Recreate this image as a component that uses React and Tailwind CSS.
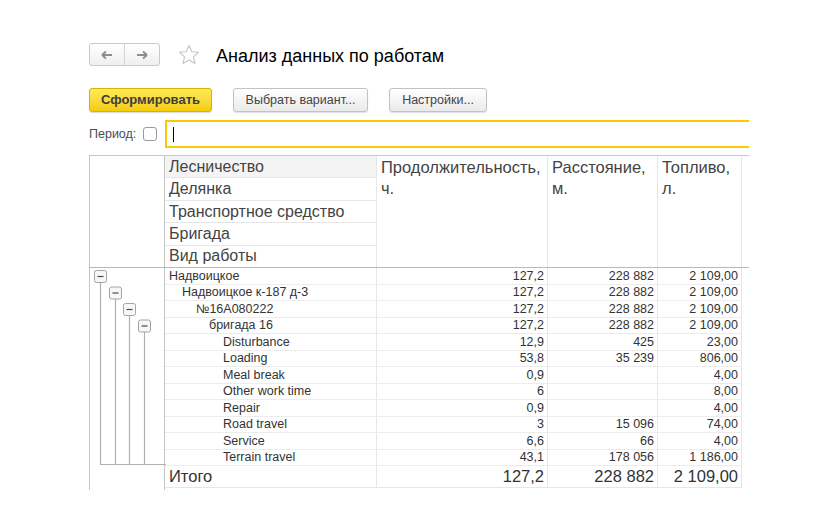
import React from 'react'

const rows = [
  { name: 'Надвоицкое', pad: 'pl-[4px]', d: '127,2', m: '228 882', f: '2 109,00' },
  { name: 'Надвоицкое к-187 д-3', pad: 'pl-[17px]', d: '127,2', m: '228 882', f: '2 109,00' },
  { name: '№16А080222', pad: 'pl-[31px]', d: '127,2', m: '228 882', f: '2 109,00' },
  { name: 'бригада 16', pad: 'pl-[44px]', d: '127,2', m: '228 882', f: '2 109,00' },
  { name: 'Disturbance', pad: 'pl-[58px]', d: '12,9', m: '425', f: '23,00' },
  { name: 'Loading', pad: 'pl-[58px]', d: '53,8', m: '35 239', f: '806,00' },
  { name: 'Meal break', pad: 'pl-[58px]', d: '0,9', m: '', f: '4,00' },
  { name: 'Other work time', pad: 'pl-[58px]', d: '6', m: '', f: '8,00' },
  { name: 'Repair', pad: 'pl-[58px]', d: '0,9', m: '', f: '4,00' },
  { name: 'Road travel', pad: 'pl-[58px]', d: '3', m: '15 096', f: '74,00' },
  { name: 'Service', pad: 'pl-[58px]', d: '6,6', m: '66', f: '4,00' },
  { name: 'Terrain travel', pad: 'pl-[58px]', d: '43,1', m: '178 056', f: '1 186,00' },
]

const groupHeads = ['Лесничество', 'Делянка', 'Транспортное средство', 'Бригада', 'Вид работы']

function Star() {
  return (
    <svg width="24" height="24" viewBox="0 0 24 24" fill="none" stroke="#c4c4c4" strokeWidth="1.1" strokeLinejoin="round">
      <path d="M12 2.5l2.8 6.2 6.7.6-5.1 4.5 1.6 6.6L12 16.9l-6 3.5 1.6-6.6-5.1-4.5 6.7-.6z" />
    </svg>
  )
}

// expand/collapse boxes and the branch lines of the grouping tree
function TreeLines() {
  const xs = [4, 19, 33, 48]
  return (
    <svg className="absolute left-0 top-0" width="76" height="200" viewBox="0 0 76 200">
      {xs.map((x, i) => (
        <line key={'v' + i} x1={x + 6.5} y1={2 + i * 16.5 + 12} x2={x + 6.5} y2="196.5" stroke="#b0b0b0" strokeWidth="1.2" />
      ))}
      <line x1="10" y1="196.5" x2="76" y2="196.5" stroke="#b0b0b0" strokeWidth="1.2" />
      {xs.map((x, i) => (
        <g key={'b' + i}>
          <rect x={x + 0.5} y={2.5 + i * 16.5} width="12" height="12" rx="2" fill="#f7f7f7" stroke="#a4a4a4" />
          <line x1={x + 3.5} y1={8.5 + i * 16.5} x2={x + 9.5} y2={8.5 + i * 16.5} stroke="#4a4a4a" strokeWidth="1.2" />
        </g>
      ))}
    </svg>
  )
}

export default function App() {
  return (
    <div className="w-[830px] h-[521px] overflow-hidden bg-white pl-[89px] pt-[43px] text-[#333]" style={{ fontFamily: '"Liberation Sans", Arial, sans-serif' }}>
      <div className="flex items-center h-[23px]">
        <div className="flex h-[23px] w-[71px] rounded-[3px] border border-[#c9c9c9] bg-gradient-to-b from-white to-[#efefef]">
          <div className="flex-1 flex items-center justify-center border-r border-[#d4d4d4]">
            <svg width="12" height="10" viewBox="0 0 12 10"><path d="M1 5h10M1 5l4-3.5M1 5l4 3.5" stroke="#8c8c8c" strokeWidth="1.8" fill="none" /></svg>
          </div>
          <div className="flex-1 flex items-center justify-center">
            <svg width="12" height="10" viewBox="0 0 12 10"><path d="M1 5h10M11 5L7 1.5M11 5L7 8.5" stroke="#8c8c8c" strokeWidth="1.8" fill="none" /></svg>
          </div>
        </div>
        <div className="ml-[17px] mt-[1px]"><Star /></div>
        <div className="ml-[15px] mt-[2px] text-[18px] text-black leading-none">Анализ данных по работам</div>
      </div>

      <div className="flex items-center gap-[21px] mt-[22px] h-[24px]">
        <button className="h-[24px] w-[123px] rounded-[3px] border border-[#d9b300] bg-gradient-to-b from-[#ffe957] to-[#f5cd00] text-[13px] font-bold text-[#3d3d3d] shadow-[0_1px_1px_rgba(0,0,0,0.15)]">Сформировать</button>
        <button className="h-[24px] w-[135px] rounded-[3px] border border-[#c2c2c2] bg-gradient-to-b from-white to-[#eaeaea] text-[12.5px] text-[#444] shadow-[0_1px_1px_rgba(0,0,0,0.12)]">Выбрать вариант...</button>
        <button className="h-[24px] w-[98px] rounded-[3px] border border-[#c2c2c2] bg-gradient-to-b from-white to-[#eaeaea] text-[12.5px] text-[#444] shadow-[0_1px_1px_rgba(0,0,0,0.12)]">Настройки...</button>
      </div>

      <div className="flex items-center mt-[8px] h-[28px]">
        <span className="text-[12.5px] text-[#4d4d4d]">Период:</span>
        <span className="ml-[7px] w-[14px] h-[14px] rounded-[3px] border border-[#9a9a9a] bg-white" />
        <div className="ml-[8px] w-[584px] h-[28px] border-l-2 border-t-2 border-b-2 border-[#fdc800] flex items-center pl-[6px]">
          <span className="w-[1px] h-[15px] bg-black" />
        </div>
      </div>

      <div className="mt-[7px] w-[660px] border-t border-[#c6c6c6]">
        <div className="flex h-[112px] border-b border-[#b8b8b8]">
          <div className="w-[76px] border-l border-r border-[#c6c6c6]" />
          <div className="w-[212px] flex flex-col border-r border-[#e6e6e6]">
            {groupHeads.map((h, i) => (
              <div key={h} className={`flex-1 min-h-0 flex items-center pl-[4px] text-[16px] leading-none text-[#444] ${i < 4 ? 'border-b border-[#e6e6e6]' : ''} ${i === 0 ? 'bg-[#f4f4f4]' : ''}`}>{h}</div>
            ))}
          </div>
          <div className="w-[171px] border-r border-[#e6e6e6] pl-[4px] pt-[1px] text-[16.5px] leading-[21px] text-[#444]">Продолжительность,<br />ч.</div>
          <div className="w-[110px] border-r border-[#e6e6e6] pl-[4px] pt-[1px] text-[16.5px] leading-[21px] text-[#444]">Расстояние,<br />м.</div>
          <div className="w-[84px] border-r border-[#e6e6e6] pl-[4px] pt-[1px] text-[16.5px] leading-[21px] text-[#444]">Топливо,<br />л.</div>
        </div>

        <div className="flex">
          <div className="relative w-[76px] h-[222px] border-l border-r border-[#c6c6c6]">
            <TreeLines />
          </div>
          <div className="flex flex-col">
            {rows.map(r => (
              <div key={r.name} className="flex h-[16.5px] border-b border-[#ececec] text-[12.5px] leading-none">
                <div className={`w-[212px] flex items-center border-r border-[#e6e6e6] ${r.pad}`}>{r.name}</div>
                <div className="w-[171px] flex items-center justify-end pr-[3px] border-r border-[#e6e6e6]">{r.d}</div>
                <div className="w-[110px] flex items-center justify-end pr-[3px] border-r border-[#e6e6e6]">{r.m}</div>
                <div className="w-[84px] flex items-center justify-end pr-[3px] border-r border-[#e6e6e6]">{r.f}</div>
              </div>
            ))}
            <div className="flex h-[22px] border-b border-[#e6e6e6] text-[16.5px] leading-none">
              <div className="w-[212px] flex items-center pl-[4px] border-r border-[#e6e6e6]">Итого</div>
              <div className="w-[171px] flex items-center justify-end pr-[3px] border-r border-[#e6e6e6]">127,2</div>
              <div className="w-[110px] flex items-center justify-end pr-[3px] border-r border-[#e6e6e6]">228 882</div>
              <div className="w-[84px] flex items-center justify-end pr-[3px] border-r border-[#e6e6e6]">2 109,00</div>
            </div>
          </div>
        </div>
      </div>
    </div>
  )
}
